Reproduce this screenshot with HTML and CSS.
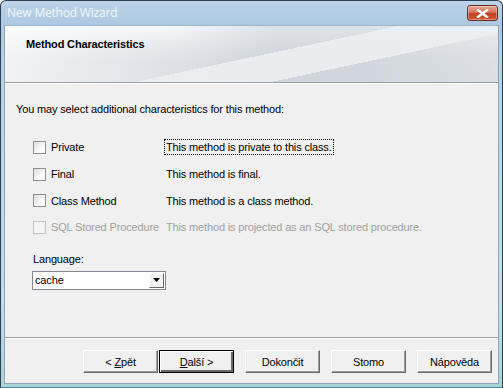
FILE: index.html
```html
<!DOCTYPE html>
<html lang="cs">
<head>
    <meta charset="UTF-8">
    <title>New Method Wizard</title>
    <link rel="stylesheet" href="styles.css">
</head>
<body>
    <div class="window">
        <div class="titlebar">
            <span class="title">New Method Wizard</span>
            <span class="close">
                <svg width="13" height="9" viewBox="0 0 13 9">
                    <path d="M2 1 L11 8 M11 1 L2 8" stroke="#fff" stroke-width="2.4" stroke-linecap="square"/>
                </svg>
            </span>
        </div>
        <div class="client">
            <div class="header">
                <div class="header-art"></div>
                <h1>Method Characteristics</h1>
            </div>
            <div class="page">
                <p class="intro">You may select additional characteristics for this method:</p>

                <div class="opts">
                    <label class="opt">
                        <span class="box"></span>
                        <span class="name">Private</span>
                        <span class="desc focus">This method is private to this class.</span>
                    </label>
                    <label class="opt">
                        <span class="box"></span>
                        <span class="name">Final</span>
                        <span class="desc">This method is final.</span>
                    </label>
                    <label class="opt">
                        <span class="box"></span>
                        <span class="name">Class Method</span>
                        <span class="desc">This method is a class method.</span>
                    </label>
                    <label class="opt off">
                        <span class="box"></span>
                        <span class="name">SQL Stored Procedure</span>
                        <span class="desc">This method is projected as an SQL stored procedure.</span>
                    </label>
                </div>

                <div class="lang">
                    <div class="lang-label">Language:</div>
                    <div class="combo">
                        <span class="combo-val">cache</span>
                        <span class="combo-btn">
                            <svg width="7" height="4" viewBox="0 0 7 4"><path d="M0 0 H7 L3.5 4 Z" fill="#000"/></svg>
                        </span>
                    </div>
                </div>
            </div>
            <div class="footer">
                <button class="btn">&lt; <u>Z</u>pět</button>
                <button class="btn default"><u>D</u>alší &gt;</button>
                <button class="btn gap">Dokončit</button>
                <button class="btn gap">Stomo</button>
                <button class="btn gap">Nápověda</button>
            </div>
        </div>
    </div>
</body>
</html>
```

FILE: styles.css
```css
*{ margin: 0; padding: 0; box-sizing: border-box; }
html,body{ width: 503px; height: 388px; overflow: hidden; background: #fff; }
body{ font-family: "Liberation Sans", Arial, sans-serif; font-size: 11px; letter-spacing: -0.15px; color: #000; }

.window{ width: 503px; height: 388px; border: 1px solid #2b3f50; border-bottom-color: #3f8f93; border-radius: 6px 6px 0 0;
    background: linear-gradient(to bottom, #bcd3e9 0, #adc9e3 24px, #b6d1e6 60px, #c4dcec 300px, #a9d3d6 100%);
    display: flex; flex-direction: column; padding: 0 3px 3px 3px; }

.titlebar{ height: 24px; display: flex; align-items: flex-start; justify-content: space-between; padding: 0 1px 0 3px; }
.title{ font-family: "Open Sans", "Liberation Sans", sans-serif; font-size: 12px; line-height: 24px; color: #f2f6fa; letter-spacing: -0.2px; }
.close{ width: 31px; height: 16px; margin-top: 4px; border: 1px solid #6b2a20; border-radius: 3px;
    background: linear-gradient(to bottom, #e8a996 0, #d7735b 45%, #c2401f 55%, #cf5a36 100%);
    display: flex; align-items: center; justify-content: center; box-shadow: inset 0 0 0 1px rgba(255,255,255,0.35); }

.client{ flex: 1; background: #f0f0f0; display: flex; flex-direction: column; border: 1px solid #8aa5bd; border-top-color: #9bb4c8; }

.header{ height: 57px; position: relative; border-bottom: 1px solid #a0a0a0; overflow: hidden;
    background: linear-gradient(to bottom, #f7f8f9 0, #eceff2 40%, #e2e6ea 100%); }
.header-art{ position: absolute; left: 0; top: 0; right: 0; bottom: 0;
    background:
        linear-gradient(168deg, transparent 0 52%, rgba(236,239,242,0.9) 52% 70%, transparent 70%),
        linear-gradient(to right, rgba(255,255,255,0.6) 0, rgba(255,255,255,0) 35%, rgba(188,195,204,0.4) 55%, rgba(200,206,213,0.5) 75%, rgba(214,219,224,0.35) 100%),
        linear-gradient(to bottom, rgba(255,255,255,0) 0, rgba(200,206,214,0.35) 60%, rgba(214,219,225,0.5) 100%); }
.header h1{ position: relative; font-size: 11px; font-weight: bold; padding: 12px 0 0 21px; }

.page{ flex: 1; border-top: 1px solid #fff; padding: 18px 0 0 11px; }
.intro{ line-height: 14px; }

.opts{ margin-top: 18px; padding-left: 17px; display: flex; flex-direction: column; }
.opt{ display: flex; align-items: center; height: 26.7px; }
.box{ width: 13px; height: 13px; border: 1px solid #8f8f8f; background: linear-gradient(135deg, #dcdcdc 0, #fefefe 70%); margin-right: 4px; }
.name{ width: 115px; padding-left: 1px; }
.desc{ padding: 1px 1px; }
.focus{ outline: 1px dotted #000; outline-offset: 0; }
.opt.off{ color: #a0a0a0; }
.opt.off .box{ border-color: #c5c5c5; background: #f4f4f4; }

.lang{ margin-top: 11px; padding-left: 17px; }
.lang-label{ line-height: 14px; }
.combo{ margin-top: 5px; margin-left: -1px; width: 134px; height: 19px; border: 1px solid #828790; background: #fff;
    display: flex; align-items: center; justify-content: space-between; }
.combo-val{ padding-left: 2px; }
.combo-btn{ width: 15px; height: 15px; margin-right: 1px; background: #f0f0f0; border: 1px solid; border-color: #fff #696969 #696969 #fff;
    display: flex; align-items: center; justify-content: center; }

.footer{ height: 46px; border-top: 1px solid #a0a0a0; box-shadow: inset 0 1px 0 #fff;
    display: flex; align-items: flex-start; padding: 12px 0 0 78px; }
.btn{ width: 75px; height: 23px; font-family: inherit; font-size: 11px; letter-spacing: -0.15px; color: #000; background: #f0f0f0;
    border: 1px solid; border-color: #fff #696969 #696969 #fff; box-shadow: inset -1px -1px 0 #a0a0a0, inset 1px 1px 0 #f0f0f0; }
.btn.default{ margin-left: 1px; border: 1px solid #000; box-shadow: inset 1px 1px 0 #fff, inset -2px -2px 0 #696969; }
.btn.gap{ margin-left: 11px; }
```
